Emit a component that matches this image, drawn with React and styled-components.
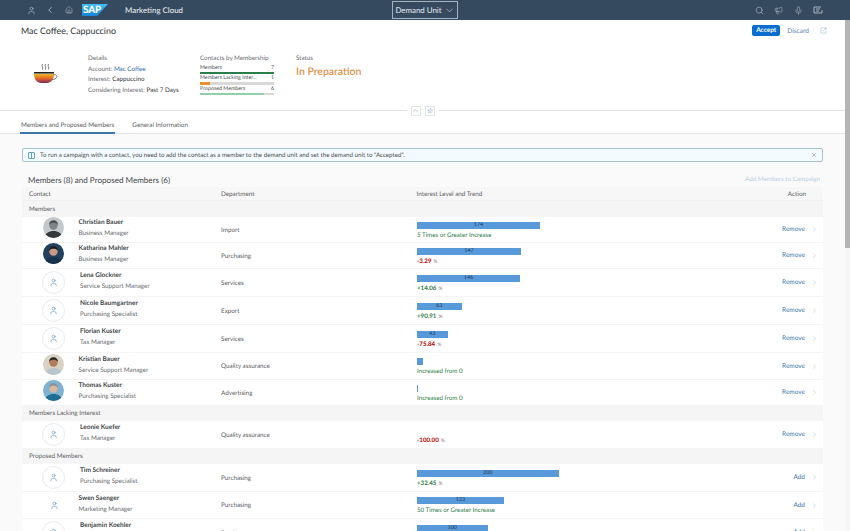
import React from "react";
import styled, { createGlobalStyle } from "styled-components";
import {
  User,
  ChevronLeft,
  ChevronDown,
  ChevronUp,
  ChevronRight,
  House,
  Search,
  Megaphone,
  Mic,
  Pin,
  X,
  SquareArrowOutUpRight,
} from "lucide-react";

const GlobalStyle = createGlobalStyle`
  html, body {
    margin: 0;
    height: 531px;
    overflow: hidden;
    background: #fff;
    font-family: "Lato", "Open Sans", sans-serif;
    color: #32363a;
    text-rendering: geometricPrecision;
    -webkit-font-smoothing: antialiased;
  }
`;

const Shell = styled.div`
  width: 850px;
  height: 531px;
  display: flex;
  flex-direction: column;
  overflow: hidden;
`;

const TopBar = styled.header`
  height: 20px;
  flex: none;
  background: #354a5f;
  color: #e6ebf0;
  display: grid;
  grid-template-columns: 1fr auto 1fr;
  align-items: center;
`;

const TopLeft = styled.div`
  display: flex;
  align-items: center;
  padding-left: 26px;
`;

const TopIcon = styled.span`
  display: flex;
  width: 10px;
  justify-content: center;
  margin-right: ${(props) => props.$gap || 0}px;
  color: #d5dde5;
`;

const Logo = styled.div`
  width: 26px;
  height: 12px;
  background: linear-gradient(180deg, #3fc0f5, #1583d8);
  clip-path: polygon(0 0, 100% 0, 58% 100%, 0 100%);
  color: #fff;
  font-size: 10px;
  font-weight: 900;
  line-height: 12px;
  padding-left: 1px;
  letter-spacing: -0.2px;
  box-sizing: border-box;
  margin-right: 17px;
`;

const AppName = styled.div`
  font-size: 7.9px;
  font-weight: 500;
`;

const UnitButton = styled.div`
  height: 18px;
  width: 66px;
  box-sizing: border-box;
  border: 1px solid #a4b3c1;
  display: flex;
  align-items: center;
  justify-content: center;
  gap: 2px;
  font-size: 7.9px;
  white-space: nowrap;
`;

const TopRight = styled.div`
  display: flex;
  justify-content: flex-end;
  align-items: center;
  gap: 10.5px;
  padding-right: 27px;
  color: #c4ced8;
`;

const Body = styled.div`
  flex: 1;
  display: flex;
  min-height: 0;
`;

const Content = styled.main`
  width: 845px;
  flex: none;
  overflow: hidden;
`;

const ScrollRail = styled.div`
  width: 5px;
  flex: none;
  background: #f6f6f6;
`;

const ScrollThumb = styled.div`
  height: 228px;
  background: #b4b4b4;
`;

const ObjectHeader = styled.section`
  height: 85px;
  padding: 4px 18px 0 21px;
  box-sizing: border-box;
`;

const TitleRow = styled.div`
  display: flex;
  align-items: flex-start;
  justify-content: space-between;
`;

const Title = styled.h1`
  margin: 0;
  font-size: 8.9px;
  line-height: 13px;
  font-weight: 400;
`;

const Actions = styled.div`
  display: flex;
  align-items: center;
  padding-top: 1px;
`;

const AcceptButton = styled.div`
  width: 28px;
  height: 11px;
  background: #0a6ed1;
  border-radius: 2px;
  color: #fff;
  font-size: 6.5px;
  font-weight: 700;
  line-height: 11px;
  text-align: center;
  margin-right: 7px;
`;

const DiscardLink = styled.div`
  font-size: 6.6px;
  color: #5a86b3;
  margin-right: 11px;
`;

const Summary = styled.div`
  display: flex;
  margin-top: 17px;
`;

const CupSlot = styled.div`
  width: 67px;
  padding: 9px 0 0 12px;
  box-sizing: border-box;
`;

const Facet = styled.div`
  width: ${(props) => props.$w}px;
  flex: none;
`;

const FacetLabel = styled.div`
  font-size: 6.25px;
  line-height: 10.6px;
  color: #6a6d70;
  white-space: nowrap;
`;

const FacetValue = styled.span`
  color: #32363a;
`;

const FacetLink = styled.span`
  color: #2b6cb0;
`;

const StatusText = styled.div`
  font-size: 10.5px;
  line-height: 15px;
  font-weight: 500;
  color: #e08c3c;
`;

const MicroRow = styled.div`
  width: 74px;
  height: 10.7px;
  position: relative;
  font-size: 5.3px;
  color: #4a4d50;
  display: flex;
  justify-content: space-between;
  line-height: 7px;
`;

const MicroTrack = styled.div`
  position: absolute;
  left: 0;
  right: 0;
  top: 7px;
  height: 2.5px;
  background: #d9d9d9;
`;

const MicroFill = styled.div`
  height: 100%;
  background: ${(props) => props.$color};
`;

const Divider = styled.div`
  display: flex;
  align-items: center;
  height: 11px;
  gap: 4px;
`;

const DividerLine = styled.div`
  flex: 1;
  height: 1px;
  background: #e1e3e5;
`;

const DividerButton = styled.div`
  width: 10px;
  height: 10px;
  box-sizing: border-box;
  border: 1px solid #e4e6e8;
  background: #fff;
  display: flex;
  align-items: center;
  justify-content: center;
  color: #3d6f9e;
`;

const TiltedPin = styled(Pin)`
  transform: rotate(45deg);
`;

const Tabs = styled.nav`
  height: 18px;
  padding-left: 20px;
  display: flex;
  gap: 16px;
  border-bottom: 1px solid #e3e5e7;
  box-sizing: border-box;
`;

const Tab = styled.div`
  height: 18px;
  box-sizing: border-box;
  padding: 4.5px 1px 0;
  font-size: 6.3px;
  line-height: 9px;
  color: #5d6064;
  border-bottom: ${(props) => (props.$active ? "2px solid #3f74a8" : "none")};
  white-space: nowrap;
`;

const ListArea = styled.section`
  background: #fafafa;
  padding: 14px 22px 0;
  height: 400px;
`;

const MessageStrip = styled.div`
  height: 14px;
  width: 801px;
  box-sizing: border-box;
  border: 1px solid #a8c2cc;
  border-radius: 2px;
  background: #f4fbff;
  display: flex;
  align-items: center;
  padding: 0 5px;
  font-size: 6.2px;
  color: #4a4d50;
`;

const StripText = styled.div`
  flex: 1;
  padding-left: 5px;
  white-space: nowrap;
`;

const ListToolbar = styled.div`
  display: flex;
  justify-content: space-between;
  align-items: flex-end;
  padding: 12px 3px 1px 6px;
  height: 25px;
  box-sizing: border-box;
`;

const ListTitle = styled.h2`
  margin: 0;
  font-size: 8.1px;
  line-height: 12px;
  font-weight: 400;
  color: #44474a;
`;

const DisabledAction = styled.div`
  font-size: 6.25px;
  line-height: 12px;
  color: #bcd0e6;
`;

const Grid = styled.div`
  display: grid;
  grid-template-columns: 199px 195.5px 1fr 60px;
  align-items: center;
  width: 801px;
`;

const HeadRow = styled(Grid)`
  height: 14px;
  background: #f7f7f7;
  font-size: 6.3px;
  color: #5d6064;
  border-bottom: 1px solid #f0f0f0;
  box-sizing: border-box;
  padding-top: 1px;
`;

const HeadCell = styled.div`
  padding-left: ${(props) => props.$pad || 0}px;
  padding-right: ${(props) => props.$padRight || 0}px;
  text-align: ${(props) => props.$align || "left"};
`;

const GroupRow = styled.div`
  width: 801px;
  height: ${(props) => props.$h}px;
  background: #f5f5f5;
  font-size: 6.3px;
  color: #5d6064;
  padding-left: 7px;
  box-sizing: border-box;
  display: flex;
  align-items: center;
`;

const Row = styled(Grid)`
  height: ${(props) => props.$h}px;
  background: #fff;
  border-bottom: 1px solid #f4f4f4;
  box-sizing: border-box;
`;

const ContactCell = styled.div`
  display: flex;
  align-items: center;
  padding-left: ${(props) => (props.$placeholder ? 20 : 21)}px;
`;

const AvatarSlot = styled.div`
  width: ${(props) => (props.$placeholder ? 38 : 35.5)}px;
  flex: none;
`;

const PersonCircle = styled.div`
  width: 23px;
  height: 23px;
  box-sizing: border-box;
  border-radius: 50%;
  border: ${(props) => (props.$bare ? "none" : "1px solid #e8eaec")};
  color: #4c7fa8;
  display: flex;
  align-items: center;
  justify-content: center;
`;

const NameBlock = styled.div`
  margin-top: -3px;
`;

const Name = styled.div`
  font-size: 6.5px;
  line-height: 11px;
  font-weight: 700;
  color: #44474a;
  white-space: nowrap;
`;

const Role = styled.div`
  font-size: 6.3px;
  line-height: 11px;
  color: #6a6d70;
  white-space: nowrap;
`;

const Department = styled.div`
  font-size: 6.3px;
  color: #5d6064;
  padding-top: 1px;
`;

const InterestCell = styled.div`
  padding: 2px 0 0 0.5px;
`;

const BarSlot = styled.div`
  height: 7px;
  margin-bottom: 3px;
`;

const Bar = styled.div`
  height: 7px;
  background: #5899da;
  color: #1f3550;
  font-size: 5.4px;
  line-height: 7px;
  text-align: center;
  box-sizing: border-box;
`;

const Trend = styled.div`
  font-size: 6.2px;
  line-height: 8px;
  white-space: nowrap;
  color: ${(props) => (props.$down ? "#bb0000" : "#2f7d4a")};
  font-weight: ${(props) => (props.$value ? 700 : 400)};
`;

const Percent = styled.span`
  font-size: 5px;
  font-weight: 400;
  color: #8a6a6a;
  margin-left: 2px;
`;

const ActionCell = styled.div`
  display: flex;
  align-items: center;
  justify-content: flex-end;
  padding-right: 5.5px;
  gap: 5.5px;
  font-size: 6.5px;
  color: #3a78ad;
`;

const ChevronWrap = styled.span`
  display: flex;
  color: #a9b0b6;
`;

const CoffeeCup = () => (
  <svg width="25" height="22" viewBox="0 0 25 22">
    <defs>
      <linearGradient id="cup" x1="0" y1="0" x2="0" y2="1">
        <stop offset="0" stopColor="#f3b61f" />
        <stop offset="0.5" stopColor="#e0662a" />
        <stop offset="1" stopColor="#7d2a5c" />
      </linearGradient>
    </defs>
    <path
      d="M9.5 1c-1.5 2 1.2 3 0 5.5M12.5 1c-1.5 2 1.2 3 0 5.5M15.5 1c-1.5 2 1.2 3 0 5.5"
      fill="none"
      stroke="#555"
      strokeWidth="0.8"
    />
    <rect x="1" y="9" width="20" height="1.6" fill="#222" />
    <path d="M1 11h20c0 5-3 9-7 9H8c-4 0-7-4-7-9z" fill="url(#cup)" />
    <path d="M20.5 12c3-1 3.8 1 3 2.5-.7 1.4-2.5 2-4.5 2" fill="none" stroke="#555" strokeWidth="0.8" />
  </svg>
);

const NotificationsIcon = () => (
  <svg width="10" height="10" viewBox="0 0 10 10" fill="none" stroke="currentColor" strokeWidth="0.8">
    <path d="M1 2h7M1 2v6h8V5M3 4h4M3 6h3" />
  </svg>
);

const InfoIcon = () => (
  <svg width="7" height="7" viewBox="0 0 7 7" fill="none" stroke="#3f8fb0" strokeWidth="0.8">
    <rect x="0.5" y="0.5" width="6" height="6" rx="0.5" />
    <path d="M3.5 1v5" />
  </svg>
);

// small drawn stand-ins for the contact photos
const Face = ({ bg, skin, hair, shirt }) => (
  <svg width="21" height="21" viewBox="0 0 21 21">
    <clipPath id={`face-${bg.slice(1)}`}>
      <circle cx="10.5" cy="10.5" r="10.5" />
    </clipPath>
    <g clipPath={`url(#face-${bg.slice(1)})`}>
      <rect width="21" height="21" fill={bg} />
      <path d="M2 21c0-5 4-7 8.5-7s8.5 2 8.5 7z" fill={shirt} />
      <circle cx="10.5" cy="8.5" r="4.2" fill={skin} />
      <path d="M6 8c0-3 2-4.8 4.5-4.8S15 5 15 8c-1-1.6-2.5-2.2-4.5-2.2S7 6.4 6 8z" fill={hair} />
    </g>
  </svg>
);

const Avatar = ({ photo, bare }) => {
  if (photo) return <Face {...photo} />;
  return (
    <PersonCircle $bare={bare}>
      <User size={9} strokeWidth={1.4} />
    </PersonCircle>
  );
};

const Interest = ({ value, width, trend, pct, down }) => (
  <InterestCell>
    <BarSlot>
      {width > 0 && (
        <Bar style={{ width }}>{width > 10 ? value : ""}</Bar>
      )}
    </BarSlot>
    {pct ? (
      <Trend $value $down={down}>
        {pct}
        <Percent>%</Percent>
      </Trend>
    ) : (
      <Trend>{trend}</Trend>
    )}
  </InterestCell>
);

const ContactRow = ({ name, role, dept, action, h, photo, bare, ...interest }) => (
  <Row $h={h}>
    <ContactCell $placeholder={!photo && !bare}>
      <AvatarSlot $placeholder={!photo && !bare}>
        <Avatar photo={photo} bare={bare} />
      </AvatarSlot>
      <NameBlock>
        <Name>{name}</Name>
        <Role>{role}</Role>
      </NameBlock>
    </ContactCell>
    <Department>{dept}</Department>
    <Interest {...interest} />
    <ActionCell>
      {action}
      <ChevronWrap>
        <ChevronRight size={7} strokeWidth={1.5} />
      </ChevronWrap>
    </ActionCell>
  </Row>
);

const groups = [
  {
    title: "Members",
    h: 16,
    rows: [
      { name: "Christian Bauer", role: "Business Manager", dept: "Import", value: 174, width: 123, trend: "5 Times or Greater Increase", action: "Remove", h: 26,
        photo: { bg: "#c4c8cb", skin: "#7d8388", hair: "#4a4e52", shirt: "#34383b" } },
      { name: "Katharina Mahler", role: "Business Manager", dept: "Purchasing", value: 147, width: 104, pct: "-3.29", down: true, action: "Remove", h: 26,
        photo: { bg: "#23405c", skin: "#c99b84", hair: "#1c1a1c", shirt: "#16324f" } },
      { name: "Lena Glockner", role: "Service Support Manager", dept: "Services", value: 146, width: 103, pct: "+14.06", action: "Remove", h: 28 },
      { name: "Nicole Baumgartner", role: "Purchasing Specialist", dept: "Export", value: 63, width: 44.5, pct: "+90.91", action: "Remove", h: 28 },
      { name: "Florian Kuster", role: "Tax Manager", dept: "Services", value: 43, width: 30.5, pct: "-75.84", down: true, action: "Remove", h: 28 },
      { name: "Kristian Bauer", role: "Service Support Manager", dept: "Quality assurance", value: 8, width: 5.5, trend: "Increased from 0", action: "Remove", h: 27,
        photo: { bg: "#d8d2c4", skin: "#b07c5a", hair: "#2a2320", shirt: "#b9c6cc" } },
      { name: "Thomas Kuster", role: "Purchasing Specialist", dept: "Advertising", value: 1, width: 1, trend: "Increased from 0", action: "Remove", h: 26,
        photo: { bg: "#7fb2d0", skin: "#d9b7a0", hair: "#8d8f90", shirt: "#1f6f93" } },
    ],
  },
  {
    title: "Members Lacking Interest",
    h: 15,
    rows: [
      { name: "Leonie Kuefer", role: "Tax Manager", dept: "Quality assurance", value: 0, width: 0, pct: "-100.00", down: true, action: "Remove", h: 28 },
    ],
  },
  {
    title: "Proposed Members",
    h: 15,
    rows: [
      { name: "Tim Schreiner", role: "Purchasing Specialist", dept: "Purchasing", value: 200, width: 141.5, pct: "+32.45", action: "Add", h: 28 },
      { name: "Swen Saenger", role: "Marketing Manager", dept: "Purchasing", value: 123, width: 87, trend: "50 Times or Greater Increase", action: "Add", h: 27, bare: true },
      { name: "Benjamin Koehler", role: "Sales Manager", dept: "Services", value: 100, width: 70.5, pct: "+12.50", action: "Add", h: 28 },
    ],
  },
];

const micro = [
  { label: "Members", count: 7, pct: 100, color: "#2b7d4a" },
  { label: "Members Lacking Inter...", count: 1, pct: 14, color: "#e9902c" },
  { label: "Proposed Members", count: 6, pct: 86, color: "#8fd0a8" },
];

export default function App() {
  return (
    <Shell>
      <GlobalStyle />
      <TopBar>
        <TopLeft>
          <TopIcon $gap={9}><User size={9} strokeWidth={1.3} /></TopIcon>
          <TopIcon $gap={9}><ChevronLeft size={10} strokeWidth={1.6} /></TopIcon>
          <TopIcon $gap={8}><House size={8} strokeWidth={1.3} /></TopIcon>
          <Logo>SAP</Logo>
          <AppName>Marketing Cloud</AppName>
        </TopLeft>
        <UnitButton>
          Demand Unit
          <ChevronDown size={11} strokeWidth={1.2} />
        </UnitButton>
        <TopRight>
          <Search size={9} strokeWidth={1.4} />
          <Megaphone size={9} strokeWidth={1.2} />
          <Mic size={9} strokeWidth={1.2} />
          <NotificationsIcon />
        </TopRight>
      </TopBar>
      <Body>
        <Content>
          <ObjectHeader>
            <TitleRow>
              <Title>Mac Coffee, Cappuccino</Title>
              <Actions>
                <AcceptButton>Accept</AcceptButton>
                <DiscardLink>Discard</DiscardLink>
                <SquareArrowOutUpRight size={7} strokeWidth={1} color="#3d6f9e" />
              </Actions>
            </TitleRow>
            <Summary>
              <CupSlot><CoffeeCup /></CupSlot>
              <Facet $w={112}>
                <FacetLabel>Details</FacetLabel>
                <FacetLabel>Account: <FacetLink>Mac Coffee</FacetLink></FacetLabel>
                <FacetLabel>Interest: <FacetValue>Cappuccino</FacetValue></FacetLabel>
                <FacetLabel>Considering Interest: <FacetValue>Past 7 Days</FacetValue></FacetLabel>
              </Facet>
              <Facet $w={96}>
                <FacetLabel>Contacts by Membership</FacetLabel>
                {micro.map((m) => (
                  <MicroRow key={m.label}>
                    <span>{m.label}</span>
                    <span>{m.count}</span>
                    <MicroTrack>
                      <MicroFill $color={m.color} style={{ width: `${m.pct}%` }} />
                    </MicroTrack>
                  </MicroRow>
                ))}
              </Facet>
              <Facet $w={100}>
                <FacetLabel>Status</FacetLabel>
                <StatusText>In Preparation</StatusText>
              </Facet>
            </Summary>
          </ObjectHeader>
          <Divider>
            <DividerLine />
            <DividerButton><ChevronUp size={7} strokeWidth={1.4} /></DividerButton>
            <DividerButton><TiltedPin size={6} strokeWidth={1.3} /></DividerButton>
            <DividerLine />
          </Divider>
          <Tabs>
            <Tab $active>Members and Proposed Members</Tab>
            <Tab>General Information</Tab>
          </Tabs>
          <ListArea>
            <MessageStrip>
              <InfoIcon />
              <StripText>
                To run a campaign with a contact, you need to add the contact as a member to the demand unit and set the demand unit to "Accepted".
              </StripText>
              <X size={6} strokeWidth={1.5} />
            </MessageStrip>
            <ListToolbar>
              <ListTitle>Members (8) and Proposed Members (6)</ListTitle>
              <DisabledAction>Add Members to Campaign</DisabledAction>
            </ListToolbar>
            <HeadRow>
              <HeadCell $pad={7}>Contact</HeadCell>
              <HeadCell>Department</HeadCell>
              <HeadCell>Interest Level and Trend</HeadCell>
              <HeadCell $align="right" $padRight={17}>Action</HeadCell>
            </HeadRow>
            {groups.map((g) => (
              <React.Fragment key={g.title}>
                <GroupRow $h={g.h}>{g.title}</GroupRow>
                {g.rows.map((r) => (
                  <ContactRow key={r.name} {...r} />
                ))}
              </React.Fragment>
            ))}
          </ListArea>
        </Content>
        <ScrollRail>
          <ScrollThumb />
        </ScrollRail>
      </Body>
    </Shell>
  );
}
